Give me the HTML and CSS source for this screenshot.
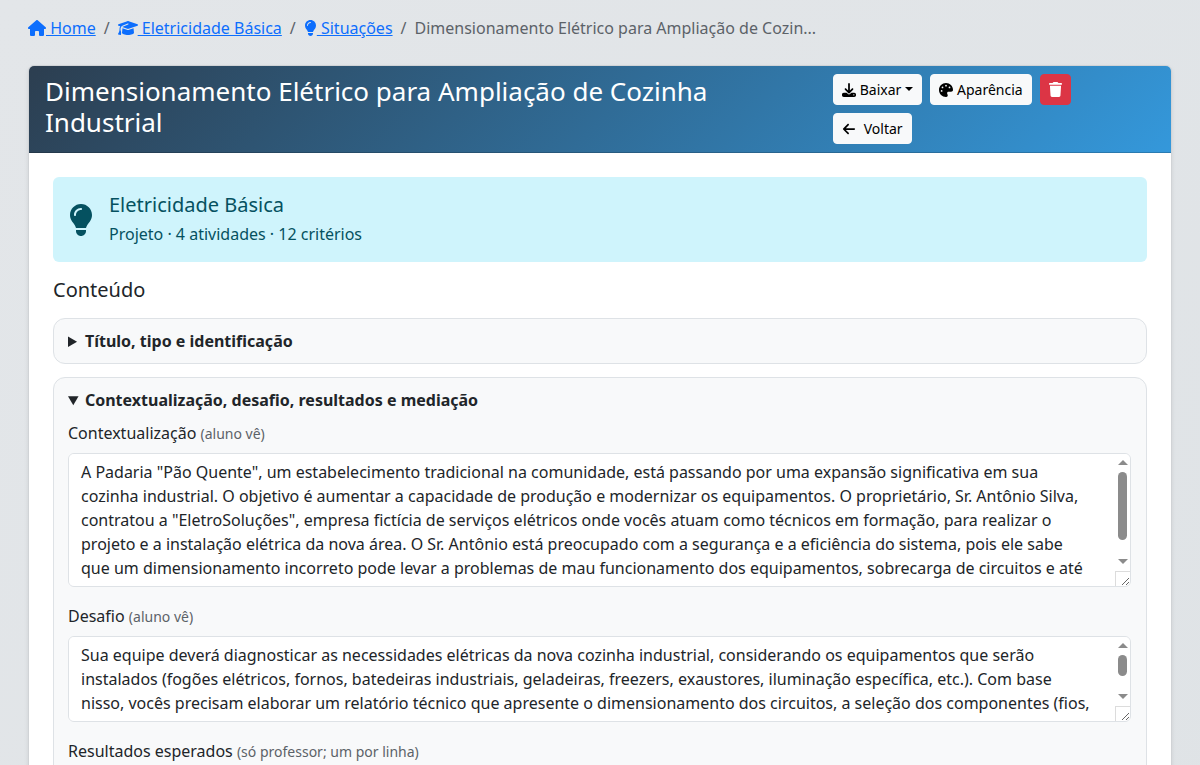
FILE: index.html
```html
<!DOCTYPE html>
<html lang="pt-BR">
<head>
  <meta charset="UTF-8">
  <meta name="viewport" content="width=device-width, initial-scale=1">
  <title>Dimensionamento Elétrico para Ampliação de Cozinha Industrial</title>
  <link rel="stylesheet" href="styles.css">
</head>
<body>
  <main class="container">
    <nav aria-label="Navegação">
      <ol class="breadcrumb">
        <li><a href="#"><svg class="icon icon-wide" viewBox="0 0 576 512"><path d="M575.8 255.5c0 18-15 32.1-32 32.1h-32l.7 160.2c0 2.7-.2 5.4-.5 8.1V472c0 22.1-17.9 40-40 40H456c-1.1 0-2.2 0-3.3-.1c-1.4 .1-2.8 .1-4.2 .1H416 392c-22.1 0-40-17.9-40-40V448 384c0-17.7-14.3-32-32-32H256c-17.7 0-32 14.3-32 32v64 24c0 22.1-17.9 40-40 40H160 128.1c-1.5 0-3-.1-4.5-.2c-1.2 .1-2.4 .2-3.6 .2H104c-22.1 0-40-17.9-40-40V360c0-.9 0-1.9 .1-2.8V287.6H32c-18 0-32-14-32-32.1c0-9 3-17 10-24L266.4 8c7-7 15-8 22-8s15 2 21 7L564.8 231.5c8 7 12 15 11 24z"/></svg> Home</a></li>
        <li><a href="#"><svg class="icon icon-cap" viewBox="0 0 640 512"><path d="M320 32c-8.1 0-16.1 1.4-23.7 4.1L15.8 137.4C6.3 140.9 0 149.9 0 160s6.3 19.1 15.8 22.6l57.9 20.9C57.3 229.3 48 259.8 48 291.9v28.1c0 28.4-10.8 57.7-22.3 80.8c-6.5 13-13.9 25.8-22.5 37.6C0 442.7-.9 448.3 .9 453.4s6 8.9 11.2 10.2l64 16c4.2 1.1 8.7 .3 12.4-2s6.3-6.1 7.1-10.4c8.6-42.8 4.3-81.2-2.1-108.7C90.3 344.3 86 329.8 80 316.5V291.9c0-30.2 10.2-58.7 27.9-81.5c12.9-15.5 29.6-28 49.2-35.7l157-61.7c8.2-3.2 17.5 .8 20.7 9s-.8 17.5-9 20.7l-157 61.7c-12.4 4.9-23.3 12.4-32.2 21.6l159.6 57.6c7.6 2.7 15.6 4.1 23.7 4.1s16.1-1.4 23.7-4.1L624.2 182.6c9.5-3.4 15.8-12.5 15.8-22.6s-6.3-19.1-15.8-22.6L343.7 36.1C336.1 33.4 328.1 32 320 32zM128 408c0 35.3 86 72 192 72s192-36.7 192-72L496.7 262.6 354.5 314c-11.1 4-22.8 6-34.5 6s-23.5-2-34.5-6L143.3 262.6 128 408z"/></svg> Eletricidade Básica</a></li>
        <li><a href="#"><svg class="icon icon-bulb" viewBox="0 0 384 512"><path d="M272 384c9.6-31.9 29.5-59.1 49.2-86.2l0 0c5.2-7.1 10.4-14.2 15.4-21.4c19.8-28.5 31.4-63 31.4-100.3C368 78.8 289.2 0 192 0S16 78.8 16 176c0 37.3 11.6 71.9 31.4 100.3c5 7.2 10.2 14.3 15.4 21.4l0 0c19.8 27.1 39.7 54.4 49.2 86.2H272zM192 512c44.2 0 80-35.8 80-80V416H112v16c0 44.2 35.8 80 80 80zM112 176c0 8.8-7.2 16-16 16s-16-7.2-16-16c0-61.9 50.1-112 112-112c8.8 0 16 7.2 16 16s-7.2 16-16 16c-44.2 0-80 35.8-80 80z"/></svg> Situações</a></li>
        <li class="active" aria-current="page">Dimensionamento Elétrico para Ampliação de Cozin...</li>
      </ol>
    </nav>

    <div class="card">
      <div class="card-header">
        <h1>Dimensionamento Elétrico para Ampliação de Cozinha Industrial</h1>
        <div class="acoes">
          <button type="button" class="btn"><svg class="icon" viewBox="0 0 512 512"><path d="M288 32c0-17.7-14.3-32-32-32s-32 14.3-32 32V274.7l-73.4-73.4c-12.5-12.5-32.8-12.5-45.3 0s-12.5 32.8 0 45.3l128 128c12.5 12.5 32.8 12.5 45.3 0l128-128c12.5-12.5 12.5-32.8 0-45.3s-32.8-12.5-45.3 0L288 274.7V32zM64 352c-35.3 0-64 28.7-64 64v32c0 35.3 28.7 64 64 64H448c35.3 0 64-28.7 64-64V416c0-35.3-28.7-64-64-64H346.5l-45.3 45.3c-25 25-65.5 25-90.5 0L165.5 352H64zm368 56a24 24 0 1 1 0 48 24 24 0 1 1 0-48z"/></svg> Baixar<span class="caret"></span></button>
          <button type="button" class="btn"><svg class="icon" viewBox="0 0 512 512"><path d="M512 256c0 .9 0 1.8 0 2.7c-.4 36.5-33.6 61.3-70.1 61.3H344c-26.5 0-48 21.5-48 48c0 3.4 .4 6.7 1 9.9c2.1 10.2 6.5 20 10.8 29.9c6.1 13.8 12.1 27.5 12.1 42c0 31.8-21.6 60.7-53.4 62c-3.5 .1-7 .2-10.6 .2C114.6 512 0 397.4 0 256S114.6 0 256 0S512 114.6 512 256zM128 288a32 32 0 1 0 -64 0 32 32 0 1 0 64 0zm0-96a32 32 0 1 0 0-64 32 32 0 1 0 0 64zM288 96a32 32 0 1 0 -64 0 32 32 0 1 0 64 0zm96 96a32 32 0 1 0 0-64 32 32 0 1 0 0 64z"/></svg> Aparência</button>
          <button type="button" class="btn btn-danger" aria-label="Excluir"><svg class="icon icon-trash" viewBox="0 0 448 512"><path d="M135.2 17.7L128 32H32C14.3 32 0 46.3 0 64S14.3 96 32 96H416c17.7 0 32-14.3 32-32s-14.3-32-32-32H320l-7.2-14.3C307.4 6.8 296.3 0 284.2 0H163.8c-12.1 0-23.2 6.8-28.6 17.7zM416 128H32L53.2 467c1.6 25.3 22.6 45 47.9 45H346.9c25.3 0 46.3-19.7 47.9-45L416 128z"/></svg></button>
          <a href="#" class="btn"><svg class="icon icon-back" viewBox="0 0 448 512"><path d="M9.4 233.4c-12.5 12.5-12.5 32.8 0 45.3l160 160c12.5 12.5 32.8 12.5 45.3 0s12.5-32.8 0-45.3L109.2 288 416 288c17.7 0 32-14.3 32-32s-14.3-32-32-32l-306.7 0L214.6 118.6c12.5-12.5 12.5-32.8 0-45.3s-32.8-12.5-45.3 0l-160 160z"/></svg> Voltar</a>
        </div>
      </div>

      <div class="card-body">
        <div class="alert">
          <svg class="icon alert-icon" viewBox="0 0 384 512"><path d="M272 384c9.6-31.9 29.5-59.1 49.2-86.2l0 0c5.2-7.1 10.4-14.2 15.4-21.4c19.8-28.5 31.4-63 31.4-100.3C368 78.8 289.2 0 192 0S16 78.8 16 176c0 37.3 11.6 71.9 31.4 100.3c5 7.2 10.2 14.3 15.4 21.4l0 0c19.8 27.1 39.7 54.4 49.2 86.2H272zM192 512c44.2 0 80-35.8 80-80V416H112v16c0 44.2 35.8 80 80 80zM112 176c0 8.8-7.2 16-16 16s-16-7.2-16-16c0-61.9 50.1-112 112-112c8.8 0 16 7.2 16 16s-7.2 16-16 16c-44.2 0-80 35.8-80 80z"/></svg>
          <div>
            <h2>Eletricidade Básica</h2>
            <p>Projeto · 4 atividades · 12 critérios</p>
          </div>
        </div>

        <h2 class="secao">Conteúdo</h2>

        <details class="bloco">
          <summary>Título, tipo e identificação</summary>
        </details>

        <details class="bloco" open>
          <summary>Contextualização, desafio, resultados e mediação</summary>
          <div class="campo">
            <label for="contexto">Contextualização <small>(aluno vê)</small></label>
            <div class="area">
              <textarea id="contexto" rows="5">A Padaria "Pão Quente", um estabelecimento tradicional na comunidade, está passando por uma expansão significativa em sua cozinha industrial. O objetivo é aumentar a capacidade de produção e modernizar os equipamentos. O proprietário, Sr. Antônio Silva, contratou a "EletroSoluções", empresa fictícia de serviços elétricos onde vocês atuam como técnicos em formação, para realizar o projeto e a instalação elétrica da nova área. O Sr. Antônio está preocupado com a segurança e a eficiência do sistema, pois ele sabe que um dimensionamento incorreto pode levar a problemas de mau funcionamento dos equipamentos, sobrecarga de circuitos e até
</textarea>
              <div class="rolagem" aria-hidden="true">
                <span class="seta"></span>
                <div class="trilho"><div class="polegar" style="height: 84%"></div></div>
                <span class="seta seta-baixo"></span>
                <span class="canto"></span>
              </div>
            </div>
          </div>
          <div class="campo">
            <label for="desafio">Desafio <small>(aluno vê)</small></label>
            <div class="area">
              <textarea id="desafio" rows="3">Sua equipe deverá diagnosticar as necessidades elétricas da nova cozinha industrial, considerando os equipamentos que serão instalados (fogões elétricos, fornos, batedeiras industriais, geladeiras, freezers, exaustores, iluminação específica, etc.). Com base nisso, vocês precisam elaborar um relatório técnico que apresente o dimensionamento dos circuitos, a seleção dos componentes (fios,

</textarea>
              <div class="rolagem" aria-hidden="true">
                <span class="seta"></span>
                <div class="trilho"><div class="polegar" style="height: 65%"></div></div>
                <span class="seta seta-baixo"></span>
                <span class="canto"></span>
              </div>
            </div>
          </div>
          <div class="campo">
            <label for="resultados">Resultados esperados <small>(só professor; um por linha)</small></label>
            <textarea id="resultados" rows="4"></textarea>
          </div>
        </details>
      </div>
    </div>
  </main>
</body>
</html>
```

FILE: styles.css
```css
* {
  box-sizing: border-box;
}
body {
  margin: 0;
  font-family: "Noto Sans", "Liberation Sans", sans-serif;
  font-size: 16px;
  line-height: 24px;
  color: #212529;
  background: linear-gradient(135deg, #e3e6e9, #dfe3e6);
}
h1, h2, p {
  margin: 0;
  font-weight: 400;
}
h1 {
  font-size: 26px;
  line-height: 31px;
}
h2 {
  font-size: 20px;
  line-height: 24px;
}
.container {
  padding: 16px 28px;
}
.icon {
  width: 1em;
  height: 1em;
  fill: currentColor;
  vertical-align: -2px;
}
.icon-wide { width: 18px; }
.icon-cap { width: 20px; }
.icon-bulb { width: 13px; }
.icon-trash {
  width: 13px;
  height: 15px;
}

/* breadcrumb */
.breadcrumb {
  display: flex;
  flex-wrap: wrap;
  list-style: none;
  margin: 0 0 25px;
  padding: 0;
}
.breadcrumb li + li::before {
  content: "/";
  padding: 0 8px;
  color: #5c6268;
}
.breadcrumb a {
  color: #0d6efd;
}
.breadcrumb .active {
  color: #5c6268;
}

/* card */
.card {
  background: #fff;
  border: 1px solid #d0d3d6;
  border-radius: 6px;
  box-shadow: 0 2px 4px rgba(0, 0, 0, 0.08);
}
.card-header {
  display: flex;
  gap: 16px;
  padding: 8px 16px;
  color: #fff;
  background: linear-gradient(135deg, #2c3e50, #3498db);
  background-origin: border-box;
  border-bottom: 1px solid rgba(0, 0, 0, 0.18);
  border-radius: 5px 5px 0 0;
}
.card-header h1 {
  flex: 1;
  align-self: center;
  margin-bottom: 4px;
}
.acoes {
  flex: 0 0 29%;
  display: flex;
  flex-wrap: wrap;
  align-items: flex-start;
  gap: 8px;
}
.btn {
  font-family: inherit;
  font-size: 14px;
  line-height: 21px;
  padding: 4px 8px;
  border: 1px solid #f8f9fa;
  border-radius: 4px;
  background: #f8f9fa;
  color: #000;
  text-decoration: none;
  cursor: pointer;
}
.btn-danger {
  background: #dc3545;
  border-color: #dc3545;
  color: #fff;
}
.icon-back {
  margin-right: 4px;
}
.caret {
  display: inline-block;
  margin-left: 4px;
  vertical-align: 4px;
  border-top: 4px solid;
  border-left: 4px solid transparent;
  border-right: 4px solid transparent;
}
.card-body {
  padding: 24px;
}
.alert {
  display: flex;
  align-items: center;
  gap: 16px;
  padding: 16px;
  margin-bottom: 16px;
  color: #055160;
  background: #cff4fc;
  border-radius: 6px;
}
.alert h2 {
  margin-bottom: 5px;
}
.alert-icon {
  width: 24px;
  height: 32px;
}
.secao {
  margin-bottom: 16px;
}

/* blocos */
.bloco {
  margin-bottom: 13px;
  padding: 10px 15px 10px 14px;
  background: #f8f9fa;
  border: 1px solid #dee2e6;
  border-radius: 12px;
}
.bloco summary {
  font-weight: 700;
  cursor: pointer;
}
.bloco[open] summary {
  margin-bottom: 9px;
}
.campo {
  margin-bottom: 17px;
}
.campo label {
  display: block;
  margin-bottom: 7px;
}
.campo small {
  font-size: 14px;
  color: #5c6268;
}
.campo textarea {
  display: block;
  width: 100%;
  padding: 6px 35px 6px 12px;
  font: inherit;
  color: inherit;
  background: #fff;
  border: 1px solid #dee2e6;
  border-radius: 6px;
  resize: vertical;
  overflow-y: auto;
  scrollbar-width: none;
}

/* barra de rolagem */
.area {
  position: relative;
}
.rolagem {
  position: absolute;
  top: 1px;
  right: 1px;
  bottom: 1px;
  width: 15px;
  display: flex;
  flex-direction: column;
  align-items: center;
  pointer-events: none;
}
.seta {
  margin: 6px 0 7px;
  border-bottom: 5px solid #8b8b8b;
  border-left: 5px solid transparent;
  border-right: 5px solid transparent;
}
.seta-baixo {
  border-bottom: 0;
  border-top: 5px solid #8b8b8b;
}
.trilho {
  flex: 1;
}
.polegar {
  width: 9px;
  background: #8b8b8b;
  border-radius: 5px;
}
.canto {
  width: 15px;
  height: 15px;
  border-top: 1px solid #dcdcdc;
  border-left: 1px solid #dcdcdc;
}
```
